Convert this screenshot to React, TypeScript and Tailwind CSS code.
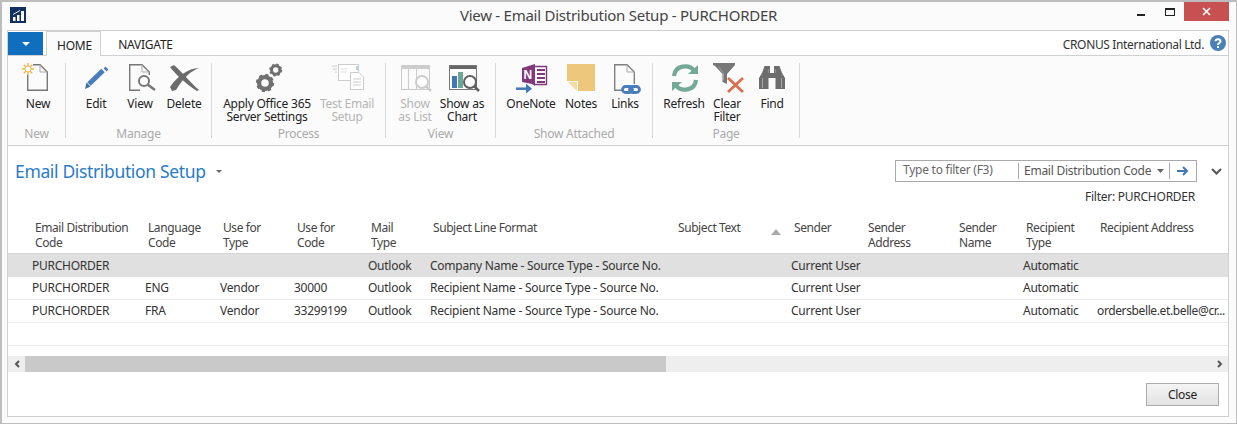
import type { ReactNode } from 'react'

const gridCols = 'grid grid-cols-[113px_75px_74px_74px_62px_245px_116px_74px_91px_67px_74px_131px]'

function Svg({ children }: { children: ReactNode }) {
  return (
    <svg width="40" height="32" viewBox="0 0 40 32" fill="none" className="block -mt-[3px] overflow-visible">
      {children}
    </svg>
  )
}

function Gear({ cx, cy, r, color }: { cx: number; cy: number; r: number; color: string }) {
  const teeth = (2 * Math.PI * r * 0.9) / 16
  return (
    <g>
      <circle cx={cx} cy={cy} r={r * 0.68} stroke={color} strokeWidth={r * 0.5} />
      <circle cx={cx} cy={cy} r={r * 0.9} stroke={color} strokeWidth={r * 0.3} strokeDasharray={`${teeth} ${teeth}`} />
    </g>
  )
}

function Lens({ cx, cy, r, x2, y2, color }: { cx: number; cy: number; r: number; x2: number; y2: number; color: string }) {
  return (
    <g>
      <circle cx={cx} cy={cy} r={r} fill="#fff" stroke={color} strokeWidth="2" />
      <path d={`M${cx + r * 0.72} ${cy + r * 0.72}L${x2} ${y2}`} stroke={color} strokeWidth="2.5" />
    </g>
  )
}

const NewIcon = (
  <Svg>
    <path d="M15 4.7H22L29.3 12V30.3H9.7V15" stroke="#777" strokeWidth="1.4" />
    <path d="M22 4.7V12H29.3" stroke="#aaa" />
    <path d="M10 3V15M4 9H16M5.8 4.8L14.2 13.2M14.2 4.8L5.8 13.2" stroke="#f2b84f" strokeWidth="1.5" />
    <circle cx="10" cy="9" r="3" fill="#fff" stroke="#f2b84f" />
  </Svg>
)

const EditIcon = (
  <Svg>
    <path d="M13 24L27 10.5" stroke="#4a7ebb" strokeWidth="5" />
    <path d="M28.5 7.5L31.5 10.5" stroke="#4a7ebb" strokeWidth="2.5" />
    <path d="M10.5 22.5L14.5 26.5L9 29Z" fill="#3f6ea5" />
  </Svg>
)

const ViewIcon = (
  <Svg>
    <path d="M20 30.3H9.7V4.7H22L29.3 12V15" stroke="#777" strokeWidth="1.4" />
    <path d="M22 4.7V12H29.3" stroke="#aaa" />
    <Lens cx={24} cy={21} r={5} x2={35} y2={30} color="#777" />
  </Svg>
)

const DeleteIcon = (
  <Svg>
    <path d="M6 7L10 5C18 12 26 22 35 30L33 31C24 25 14 17 6 7Z" fill="#6b6b6b" />
    <path d="M35 8C27 11 20 17 12 30L8 31L6 27C13 17 24 8 35 8Z" fill="#6b6b6b" />
  </Svg>
)

const GearsIcon = (
  <Svg>
    <Gear cx={18} cy={23} r={8.7} color="#707070" />
    <Gear cx={28.7} cy={10} r={6.2} color="#707070" />
  </Svg>
)

const TestEmailIcon = (
  <Svg>
    <path d="M5 6H10M6 9H10M8 12H10" stroke="#ccc" />
    <rect x="11.5" y="4.5" width="20" height="16" stroke="#ccc" fill="#fff" />
    <rect x="29" y="6" width="3" height="4" fill="#b9cfe6" />
    <path d="M14 9H20M14 12H20" stroke="#ddd" />
    <path d="M23.5 12.5H32L36.5 17V29.5H23.5Z" fill="#fff" stroke="#ccc" />
    <path d="M26 19H34M26 22H34M26 25H34" stroke="#ccc" />
  </Svg>
)

const ListIcon = (
  <Svg>
    <rect x="6" y="5" width="29" height="4" fill="#ccc" />
    <rect x="6.5" y="5.5" width="28" height="24" stroke="#ccc" />
    <path d="M13.5 9V29M21.5 9V29" stroke="#ccc" />
    <Lens cx={27} cy={22} r={6} x2={36} y2={31} color="#ccc" />
  </Svg>
)

const ChartIcon = (
  <Svg>
    <rect x="7" y="5" width="28" height="4" fill="#666" />
    <rect x="7.5" y="5.5" width="27" height="24" stroke="#777" />
    <rect x="10" y="16" width="5" height="12" fill="#3f78b5" />
    <rect x="16" y="12" width="5" height="16" fill="#6fa594" />
    <Lens cx={28} cy={22} r={6} x2={37} y2={31} color="#5f5f5f" />
  </Svg>
)

const OneNoteIcon = (
  <Svg>
    <path d="M11 8L24 4V26L21 24L11 22Z" fill="#80397b" />
    <text x="12.5" y="18.5" fill="#fff" fontSize="12" fontWeight="700" fontFamily="'Liberation Sans', sans-serif">N</text>
    <path d="M24 6.5H35.5V24.5H24" stroke="#80397b" strokeWidth="1.4" />
    <path d="M26 10H34M26 14H34M26 18H34M26 22H34" stroke="#80397b" strokeWidth="2" />
    <path d="M5 28.7H15" stroke="#3f78b5" strokeWidth="2.5" />
    <path d="M15 23.5L21 28.7L15 33.5Z" fill="#3f78b5" />
  </Svg>
)

const NotesIcon = (
  <Svg>
    <path d="M6 4H34V31H17V21H6Z" fill="#edc77b" />
    <path d="M7 22H16V31Z" fill="#f5dba8" />
  </Svg>
)

const LinksIcon = (
  <Svg>
    <path d="M17 30.3H9.7V4.7H22L29.3 12V24" stroke="#808080" strokeWidth="1.4" />
    <path d="M22 4.7V12H29.3" stroke="#aaa" />
    <rect x="17.5" y="26.5" width="10" height="6" rx="3" stroke="#4a7ebb" strokeWidth="2.8" fill="#fff" />
    <rect x="24.5" y="26.5" width="10" height="6" rx="3" stroke="#4a7ebb" strokeWidth="2.8" />
  </Svg>
)

const RefreshIcon = (
  <Svg>
    <path d="M10 16C11 5 25 4 30 10.5" stroke="#74a998" strokeWidth="4.2" />
    <path d="M24 14H34V5Z" fill="#74a998" />
    <path d="M32 20C31 31 17 32 12 25.5" stroke="#74a998" strokeWidth="4.2" />
    <path d="M18 22H8V31Z" fill="#74a998" />
  </Svg>
)

const ClearFilterIcon = (
  <Svg>
    <path d="M6 3H28V5L20 14V24L15.5 22V14L8 6L6 5Z" fill="#777" />
    <path d="M11 6.5L16.5 13V20" stroke="#aaa" strokeWidth="0.8" />
    <path d="M21 18L36 32M36 18L21 32" stroke="#d9704f" strokeWidth="2.8" />
  </Svg>
)

const FindIcon = (
  <Svg>
    <path d="M12.5 6H18V13H22V6H27.5L30 13L33 18V29H23.5V18H16.5V29H7V18L10 13Z" fill="#6d6d6d" />
    <path d="M10.5 18V28M29.5 18V28" stroke="#a5a5a5" />
    <path d="M16.5 9V13M23.5 9V13" stroke="#8a8a8a" />
  </Svg>
)

function RibbonButton({ icon, label, w, disabled }: { icon: ReactNode; label: ReactNode; w: string; disabled?: boolean }) {
  return (
    <div className={`flex flex-col items-center ${w}`}>
      {icon}
      <div className={`mt-[5px] text-center text-[12px] leading-[13px] whitespace-nowrap ${disabled ? 'text-[#b5b5b5]' : 'text-[#222]'}`}>{label}</div>
    </div>
  )
}

function RibbonGroup({ label, w, pl, children }: { label: string; w: string; pl: string; children: ReactNode }) {
  return (
    <div className={`flex flex-col shrink-0 h-[75px] mt-[7px] border-r border-[#d8d8d8] ${w}`}>
      <div className={`flex h-[66px] ${pl}`}>{children}</div>
      <div className="text-center text-[12px] leading-[9px] text-[#aaa]">{label}</div>
    </div>
  )
}

const headers: ReactNode[] = [
  <>Email Distribution<br />Code</>,
  <>Language<br />Code</>,
  <>Use for<br />Type</>,
  <>Use for<br />Code</>,
  <>Mail<br />Type</>,
  <>Subject Line Format</>,
  <div className="flex justify-between pr-[3px]">
    <span>Subject Text</span>
    <svg width="10" height="6" viewBox="0 0 10 6" className="mt-[9px]"><path d="M0 6L5 0L10 6Z" fill="#aaa" /></svg>
  </div>,
  <>Sender</>,
  <>Sender<br />Address</>,
  <>Sender<br />Name</>,
  <>Recipient<br />Type</>,
  <>Recipient Address</>,
]

const rows = [
  ['PURCHORDER', '', '', '', 'Outlook', 'Company Name - Source Type - Source No.', '', 'Current User', '', '', 'Automatic', ''],
  ['PURCHORDER', 'ENG', 'Vendor', '30000', 'Outlook', 'Recipient Name - Source Type - Source No.', '', 'Current User', '', '', 'Automatic', ''],
  ['PURCHORDER', 'FRA', 'Vendor', '33299199', 'Outlook', 'Recipient Name - Source Type - Source No.', '', 'Current User', '', '', 'Automatic', 'ordersbelle.et.belle@cr...'],
]

export default function App() {
  return (
    <div className="w-[1237px] h-[424px] overflow-hidden flex flex-col border-2 border-[#bdbdbd] border-b-[1px] border-r-[1px] bg-[#fbfbfb] font-['Noto_Sans',sans-serif] text-[12px] tracking-[-0.25px] text-[#222]">
      {/* Title bar */}
      <div className="relative flex h-[28px] shrink-0 items-start justify-between pl-[8px]">
        <svg width="16" height="16" viewBox="0 0 16 16" className="mt-[5px]">
          <rect width="16" height="16" fill="#12305f" />
          <path d="M3 14V10H5.5V14ZM7 14V8H9.5V14ZM11 14V4H14V14Z" fill="#fff" />
          <path d="M3 7.5L10 3.5" stroke="#fff" strokeWidth="0.9" />
        </svg>
        <div className="absolute left-0 right-[1px] top-[3px] text-center text-[15px] leading-[20px] text-[#444]">View - Email Distribution Setup - PURCHORDER</div>
        <div className="flex items-start pr-[7px]">
          <div className="flex h-[19px] w-[29px] items-center justify-center"><span className="mt-[6px] block h-[2px] w-[8px] bg-[#222]" /></div>
          <div className="flex h-[19px] w-[29px] items-center justify-center"><span className="block h-[8px] w-[10px] border border-t-2 border-[#222]" /></div>
          <div className="flex h-[19px] w-[45px] items-center justify-center bg-[#c75050]">
            <svg width="9" height="9" viewBox="0 0 9 9"><path d="M1 1L8 8M8 1L1 8" stroke="#fff" strokeWidth="1.6" /></svg>
          </div>
        </div>
      </div>

      {/* Main panel */}
      <div className="ml-[5px] mr-[7px] mb-[6px] flex min-h-0 flex-1 flex-col border border-[#cfcfcf] bg-white">
        {/* Tabs */}
        <div className="flex h-[25px] shrink-0 border-b border-[#d0d0d0]">
          <div className="mt-[1px] flex h-[23px] w-[35px] items-center justify-center bg-[#106ebe]">
            <svg width="8" height="4" viewBox="0 0 8 4"><path d="M0 0H8L4 4Z" fill="#fff" /></svg>
          </div>
          <div className="ml-[3px] flex h-[25px] w-[55px] items-center justify-center border border-b-0 border-[#d0d0d0] bg-[#fbfbfb] pt-[3px] pl-[2px] text-[12px] text-[#222]">HOME</div>
          <div className="flex h-[24px] w-[89px] items-center justify-center pt-[3px] text-[12px] text-[#222]">NAVIGATE</div>
          <div className="ml-auto flex items-center gap-[6px] pr-[2px]">
            <span className="pt-[4px] tracking-[-0.35px] text-[#333]">CRONUS International Ltd.</span>
            <svg width="16" height="16" viewBox="0 0 16 16">
              <circle cx="8" cy="8" r="8" fill="#4a80b8" />
              <path d="M5.5 6.2C5.5 3.6 10.5 3.6 10.5 6.2C10.5 8 8 8 8 10" stroke="#fff" strokeWidth="2" fill="none" />
              <rect x="7" y="11" width="2" height="2" fill="#fff" />
            </svg>
          </div>
        </div>

        {/* Ribbon */}
        <div className="flex h-[90px] shrink-0 border-b border-[#d0d0d0] bg-[#fbfbfb]">
          <RibbonGroup label="New" w="w-[58px]" pl="pl-[8px]">
            <RibbonButton icon={NewIcon} label="New" w="w-[44px]" />
          </RibbonGroup>
          <RibbonGroup label="Manage" w="w-[146px]" pl="pl-[8px]">
            <RibbonButton icon={EditIcon} label="Edit" w="w-[44px]" />
            <RibbonButton icon={ViewIcon} label="View" w="w-[44px]" />
            <RibbonButton icon={DeleteIcon} label="Delete" w="w-[44px]" />
          </RibbonGroup>
          <RibbonGroup label="Process" w="w-[174px]" pl="pl-[11px]">
            <RibbonButton icon={GearsIcon} label={<>Apply Office 365<br />Server Settings</>} w="w-[88px]" />
            <RibbonButton icon={TestEmailIcon} label={<>Test Email<br />Setup</>} w="w-[72px]" disabled />
          </RibbonGroup>
          <RibbonGroup label="View" w="w-[110px]" pl="pl-[6px]">
            <RibbonButton icon={ListIcon} label={<>Show<br />as List</>} w="w-[46px]" disabled />
            <RibbonButton icon={ChartIcon} label={<>Show as<br />Chart</>} w="w-[48px]" />
          </RibbonGroup>
          <RibbonGroup label="Show Attached" w="w-[157px]" pl="pl-[8px]">
            <RibbonButton icon={OneNoteIcon} label="OneNote" w="w-[54px]" />
            <RibbonButton icon={NotesIcon} label="Notes" w="w-[46px]" />
            <RibbonButton icon={LinksIcon} label="Links" w="w-[42px]" />
          </RibbonGroup>
          <RibbonGroup label="Page" w="w-[147px]" pl="pl-[9px]">
            <RibbonButton icon={RefreshIcon} label="Refresh" w="w-[44px]" />
            <RibbonButton icon={ClearFilterIcon} label={<>Clear<br />Filter</>} w="w-[42px]" />
            <RibbonButton icon={FindIcon} label="Find" w="w-[48px]" />
          </RibbonGroup>
        </div>

        {/* Page heading and filter */}
        <div className="flex h-[41px] shrink-0 items-start justify-between pl-[7px] pr-[6px]">
          <div className="mt-[12px] flex items-center gap-[10px]">
            <span className="text-[17.5px] leading-[26px] tracking-[-0.35px] text-[#2a7bc8]">Email Distribution Setup</span>
            <svg width="6" height="3" viewBox="0 0 6 3"><path d="M0 0H6L3 3Z" fill="#666" /></svg>
          </div>
          <div className="mt-[14px] flex items-center gap-[14px]">
            <div className="flex h-[22px] w-[302px] items-center border border-[#a9a9a9]">
              <span className="w-[122px] shrink-0 pb-[3px] pl-[7px] text-[#666]">Type to filter (F3)</span>
              <span className="flex h-[16px] w-[152px] shrink-0 items-center justify-between border-r border-l border-[#a9a9a9] pb-[1px] pl-[5px] pr-[5px] text-[#555]">
                Email Distribution Code
                <svg width="7" height="4" viewBox="0 0 7 4"><path d="M0 0H7L3.5 4Z" fill="#666" /></svg>
              </span>
              <svg width="12" height="10" viewBox="0 0 12 10" className="ml-[7px]"><path d="M0 5H10M6 1L10 5L6 9" stroke="#3f78b5" strokeWidth="2" fill="none" /></svg>
            </div>
            <svg width="11" height="7" viewBox="0 0 11 7"><path d="M1 1L5.5 5.5L10 1" stroke="#555" strokeWidth="2" fill="none" /></svg>
          </div>
        </div>

        <div className="h-[31px] shrink-0 pr-[33px] pt-[2px] text-right leading-[16px] text-[#333]">Filter: PURCHORDER</div>

        {/* Table */}
        <div className={`${gridCols} h-[36px] shrink-0 border-b border-[#d5d5d5] pl-[17px] pt-[2px] tracking-[-0.42px] text-[#444]`}>
          {headers.map((h, i) => (
            <div key={i} className="pl-[10px] leading-[15px] whitespace-nowrap">{h}</div>
          ))}
        </div>
        {rows.map((row, i) => (
          <div key={i} className={`${gridCols} h-[23px] shrink-0 items-center pl-[17px] ${i === 0 ? 'bg-[#e0e0e0]' : 'border-b border-[#ececec]'}`}>
            {row.map((cell, j) => (
              <div key={j} className={`pl-[7px] whitespace-nowrap text-[#333] ${j === 11 ? 'tracking-[-0.38px]' : ''}`}>{cell}</div>
            ))}
          </div>
        ))}
        <div className="h-[23px] shrink-0 border-b border-[#ececec]" />

        {/* Horizontal scroll bar */}
        <div className="mt-[10px] flex h-[16px] shrink-0 items-center bg-[#eeeeee]">
          <div className="flex w-[17px] justify-center">
            <svg width="6" height="8" viewBox="0 0 6 8"><path d="M5 1L2 4L5 7" stroke="#555" strokeWidth="2" fill="none" /></svg>
          </div>
          <div className="h-full w-[641px] bg-[#c9c9c9]" />
          <div className="ml-auto flex w-[17px] justify-center">
            <svg width="6" height="8" viewBox="0 0 6 8"><path d="M1 1L4 4L1 7" stroke="#555" strokeWidth="2" fill="none" /></svg>
          </div>
        </div>

        {/* Footer */}
        <div className="flex flex-1 items-start justify-end pr-[9px] pt-[11px]">
          <button className="h-[23px] w-[73px] border border-[#acacac] bg-gradient-to-b from-[#f4f4f4] to-[#e3e3e3] text-[#222]">Close</button>
        </div>
      </div>
    </div>
  )
}
